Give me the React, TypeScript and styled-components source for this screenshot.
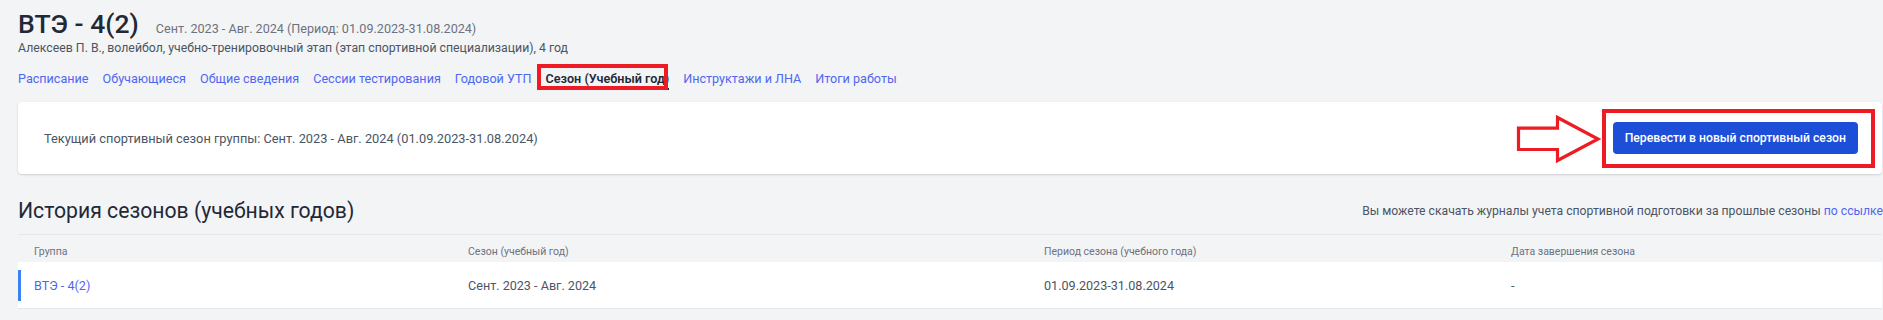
import React from 'react';
import styled, { createGlobalStyle } from 'styled-components';

const GlobalStyle = createGlobalStyle`
	body {
		margin: 0;
		background: #f3f4f6;
		font-family: Roboto, 'Liberation Sans', sans-serif;
		color: #4b5563;
		overflow: hidden;
	}
`;

const tabs = [
	'Расписание',
	'Обучающиеся',
	'Общие сведения',
	'Сессии тестирования',
	'Годовой УТП',
	'Сезон (Учебный год)',
	'Инструктажи и ЛНА',
	'Итоги работы',
];

const ACTIVE_TAB = 'Сезон (Учебный год)';

const columns = ['Группа', 'Сезон (учебный год)', 'Период сезона (учебного года)', 'Дата завершения сезона'];

const seasons = [
	{ group: 'ВТЭ - 4(2)', season: 'Сент. 2023 - Авг. 2024', period: '01.09.2023-31.08.2024', finished: '-' },
];

const ArrowMark = () => (
	<ArrowSvg width="87" height="52" viewBox="0 0 87 52">
		<polygon
			points="3.5,15.2 42.5,15.2 42.5,4.5 83,26 42.5,47.5 42.5,36.5 3.5,36.5"
			fill="none"
			stroke="#ed1c24"
			strokeWidth="3.2"
			strokeLinejoin="miter"
		/>
	</ArrowSvg>
);

export default function App() {
	return (
		<Page>
			<GlobalStyle />
			<TitleRow>
				<Title>ВТЭ - 4(2)</Title>
				<Subtitle>Сент. 2023 - Авг. 2024 (Период: 01.09.2023-31.08.2024)</Subtitle>
			</TitleRow>
			<Meta>Алексеев П. В., волейбол, учебно-тренировочный этап (этап спортивной специализации), 4 год</Meta>

			<Tabs>
				{tabs.map((tab) => (
					<Tab key={tab} active={tab === ACTIVE_TAB}>
						{tab}
					</Tab>
				))}
			</Tabs>

			<Card>
				<CardText>Текущий спортивный сезон группы: Сент. 2023 - Авг. 2024 (01.09.2023-31.08.2024)</CardText>
				<ArrowMark />
				<Highlight>
					<PrimaryButton>Перевести в новый спортивный сезон</PrimaryButton>
				</Highlight>
			</Card>

			<SectionHeader>
				<SectionTitle>История сезонов (учебных годов)</SectionTitle>
				<SectionNote>
					Вы можете скачать журналы учета спортивной подготовки за прошлые сезоны <NoteLink>по ссылке</NoteLink>
				</SectionNote>
			</SectionHeader>

			<Table>
				<HeadRow>
					{columns.map((col) => (
						<HeadCell key={col}>{col}</HeadCell>
					))}
				</HeadRow>
				{seasons.map((s) => (
					<BodyRow key={s.group}>
						<GroupCell>{s.group}</GroupCell>
						<BodyCell>{s.season}</BodyCell>
						<BodyCell>{s.period}</BodyCell>
						<BodyCell>{s.finished}</BodyCell>
					</BodyRow>
				))}
			</Table>
		</Page>
	);
}

const Page = styled.div`
	padding: 8px 1px 0 18px;
	width: 1864px;
`;

const TitleRow = styled.div`
	display: flex;
	align-items: baseline;
	gap: 17px;
`;

const Title = styled.h1`
	margin: 0;
	font-size: 26.5px;
	line-height: 31px;
	font-weight: 500;
	color: #1f2937;
`;

const Subtitle = styled.span`
	font-size: 12.6px;
	color: #6b7280;
`;

const Meta = styled.div`
	margin-top: 1px;
	font-size: 12.3px;
	line-height: 16px;
	color: #4b5563;
`;

const Tabs = styled.nav`
	display: flex;
	gap: 14px;
	margin-top: 15px;
`;

const Tab = styled.a<{ active: boolean }>`
	position: relative;
	font-size: 12.6px;
	line-height: 15px;
	padding-bottom: 2px;
	border-bottom: 2px solid ${({ active }) => (active ? '#1f2937' : 'transparent')};
	color: ${({ active }) => (active ? '#1f2937' : '#4f67f0')};
	font-weight: ${({ active }) => (active ? 600 : 400)};
	cursor: pointer;

	${({ active }) =>
		active &&
		`
		&::after {
			content: '';
			position: absolute;
			left: -9px;
			right: 1px;
			top: -7px;
			bottom: -2px;
			border: 4px solid #ed1c24;
		}
	`}
`;

const Card = styled.div`
	display: flex;
	align-items: center;
	margin-top: 12px;
	padding: 7px 7px 6px 26px;
	background: #fff;
	border-radius: 4px;
	box-shadow: 0 1px 3px rgba(0, 0, 0, 0.1), 0 1px 2px rgba(0, 0, 0, 0.06);
`;

const CardText = styled.div`
	flex: 1;
	font-size: 12.8px;
	color: #4b5563;
`;

const ArrowSvg = styled.svg`
	display: block;
	flex-shrink: 0;
`;

const Highlight = styled.div`
	border: 4px solid #ed1c24;
	padding: 9px 13px 10px 7px;
`;

const PrimaryButton = styled.button`
	display: block;
	height: 32px;
	padding: 0 12px;
	border: none;
	border-radius: 4px;
	background: #1d4ed8;
	color: #fff;
	font-family: Roboto, 'Liberation Sans', sans-serif;
	font-size: 12.2px;
	font-weight: 500;
	cursor: pointer;
`;

const SectionHeader = styled.div`
	display: flex;
	align-items: center;
	justify-content: space-between;
	margin-top: 25px;
	padding-bottom: 11px;
	border-bottom: 1px solid #e5e7eb;
`;

const SectionTitle = styled.h2`
	margin: 0;
	font-size: 21.2px;
	line-height: 24px;
	font-weight: 400;
	color: #1f2937;
`;

const SectionNote = styled.div`
	font-size: 12.2px;
	color: #4b5563;
	white-space: nowrap;
	margin-right: -1px;
`;

const NoteLink = styled.a`
	color: #4f67f0;
	cursor: pointer;
`;

const Table = styled.div`
	display: grid;
	grid-template-columns: 434px 576px 467px 1fr;
`;

const HeadRow = styled.div`
	display: contents;
`;

const HeadCell = styled.div`
	padding: 10px 0 4px 16px;
	font-size: 10.5px;
	line-height: 13px;
	color: #6b7280;
`;

const BodyRow = styled.div`
	display: contents;
`;

const BodyCell = styled.div`
	display: flex;
	align-items: center;
	height: 46px;
	padding-left: 16px;
	background: #fff;
	border-bottom: 1px solid #e5e7eb;
	font-size: 12.6px;
	font-weight: 400;
	color: #4b5563;
`;

const GroupCell = styled(BodyCell)`
	position: relative;
	color: #4f67f0;

	&::before {
		content: '';
		position: absolute;
		left: 0;
		top: 8px;
		bottom: 7px;
		width: 3px;
		background: #3b82f6;
	}
`;
